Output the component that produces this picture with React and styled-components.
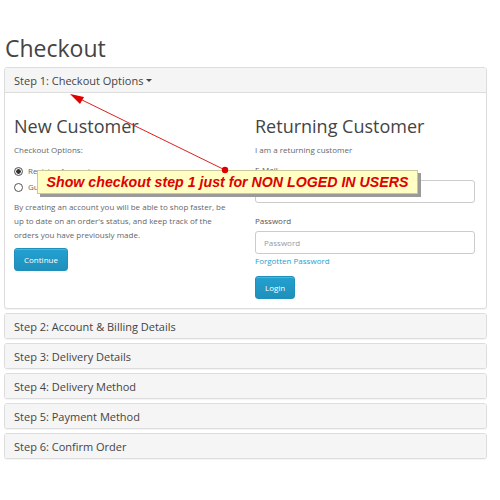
import React from 'react';
import styled, { createGlobalStyle } from 'styled-components';

const GlobalStyle = createGlobalStyle`
  html, body { margin: 0; padding: 0; background: #fff; }
  body { font-family: "Open Sans", "Liberation Sans", sans-serif; color: #666; }
`;

const steps = [
  'Step 2: Account & Billing Details',
  'Step 3: Delivery Details',
  'Step 4: Delivery Method',
  'Step 5: Payment Method',
  'Step 6: Confirm Order',
];

const App = () => {
  return <>
    <GlobalStyle />
    <Page>
      <Title>Checkout</Title>
      <Panel>
        <PanelHeading>Step 1: Checkout Options <Caret /></PanelHeading>
        <PanelBody>
          <Column>
            <Heading>New Customer</Heading>
            <Small>Checkout Options:</Small>
            <RadioRow><Radio checked />Register Account</RadioRow>
            <RadioRow><Radio />Guest Checkout</RadioRow>
            <Text>By creating an account you will be able to shop faster, be up to date on an order's status, and keep track of the orders you have previously made.</Text>
            <Button>Continue</Button>
          </Column>
          <Column>
            <Heading>Returning Customer</Heading>
            <Small>I am a returning customer</Small>
            <Label>E-Mail</Label>
            <Input placeholder="E-Mail Address" />
            <Label $top={11}>Password</Label>
            <Input placeholder="Password" />
            <Link href="#">Forgotten Password</Link>
            <Button $top={8}>Login</Button>
          </Column>
        </PanelBody>
      </Panel>
      {steps.map((s, i) => (
        <Panel key={i} $top={4}>
          <PanelHeading $flat>{s}</PanelHeading>
        </Panel>
      ))}
      <Callout>Show checkout step 1 just for NON LOGED IN USERS</Callout>
      <Arrow width="500" height="500" viewBox="0 0 500 500">
        <line x1="225" y1="170" x2="78" y2="98" stroke="#e02020" strokeWidth="1" />
        <polygon points="70,94 84,97 80,104" fill="#e00000" />
        <circle cx="225" cy="170" r="3.2" fill="#e00000" />
      </Arrow>
    </Page>
  </>
}

export default App;

const Page = styled.div`
  position: relative;
  width: 483px;
  height: 500px;
  padding: 0 13px 0 4px;
`
const Title = styled.h1`
  margin: 0;
  padding: 34px 0 0 1px;
  font-size: 23px;
  font-weight: 400;
  line-height: 28px;
  color: #444;
  height: 33px;
`
const Panel = styled.div`
  margin-top: ${p => p.$top || 0}px;
  border: 1px solid #ddd;
  border-radius: 3px;
  background: #fff;
  box-shadow: 0 1px 1px rgba(0,0,0,.05);
  overflow: hidden;
`
const PanelHeading = styled.div`
  height: 24px;
  display: flex;
  align-items: center;
  padding: 0 9px;
  background: #f5f5f5;
  border-bottom: ${p => p.$flat ? 'none' : '1px solid #ddd'};
  font-size: 11px;
  color: #444;
`
const Caret = styled.span`
  display: inline-block;
  margin-left: 3px;
  border-top: 3px solid #444;
  border-left: 3px solid transparent;
  border-right: 3px solid transparent;
`
const PanelBody = styled.div`
  display: grid;
  grid-template-columns: 220px 220px;
  column-gap: 21px;
  padding: 22px 10px 10px 9px;
  height: 183px;
`
const Column = styled.div`
  display: flex;
  flex-direction: column;
  align-items: flex-start;
`
const Heading = styled.h2`
  margin: 0 0 6px;
  font-size: 18px;
  font-weight: 400;
  line-height: 22px;
  color: #444;
`
const Small = styled.p`
  margin: 0 0 6px;
  font-size: 8px;
  line-height: 14px;
`
const RadioRow = styled.label`
  display: flex;
  align-items: center;
  gap: 5px;
  font-size: 8px;
  line-height: 16px;
  color: #666;
`
const Radio = styled.span`
  width: 7px;
  height: 7px;
  border-radius: 50%;
  border: 1px solid #555;
  background: ${p => p.checked ? 'radial-gradient(circle, #333 0 2px, #eee 2.5px)' : '#fff'};
`
const Text = styled.p`
  margin: 5px 0 0;
  font-size: 8px;
  line-height: 14px;
`
const Button = styled.button`
  margin-top: ${p => p.$top ?? 6}px;
  height: 23px;
  padding: 0 9px;
  border: 1px solid #1f90bb;
  border-radius: 3px;
  background: linear-gradient(#23a1d1, #1f90bb);
  color: #fff;
  font-family: inherit;
  font-size: 8px;
  box-shadow: inset 0 1px 0 rgba(255,255,255,.2);
`
const Label = styled.div`
  margin-top: ${p => p.$top || 0}px;
  font-size: 8px;
  line-height: 14px;
  color: #555;
`
const Input = styled.input`
  box-sizing: border-box;
  width: 220px;
  height: 23px;
  margin-top: 3px;
  padding: 0 8px;
  border: 1px solid #ccc;
  border-radius: 3px;
  font-family: inherit;
  font-size: 8px;
  color: #555;
  &::placeholder { color: #999; }
`
const Link = styled.a`
  margin-top: 0;
  font-size: 8px;
  line-height: 14px;
  color: #23a1d1;
  text-decoration: none;
`
const Callout = styled.div`
  position: absolute;
  left: 37px;
  top: 170px;
  width: 381px;
  height: 24px;
  box-sizing: border-box;
  display: flex;
  align-items: center;
  justify-content: center;
  background: #ffffc4;
  border: 1px solid #c8c89a;
  box-shadow: 3px 3px 0 #9a9a9a;
  font-family: "Liberation Sans", Arial, sans-serif;
  font-weight: 700;
  font-style: italic;
  font-size: 14.2px;
  color: #e00000;
  white-space: nowrap;
`
const Arrow = styled.svg`
  position: absolute;
  left: 0;
  top: 0;
  pointer-events: none;
`
